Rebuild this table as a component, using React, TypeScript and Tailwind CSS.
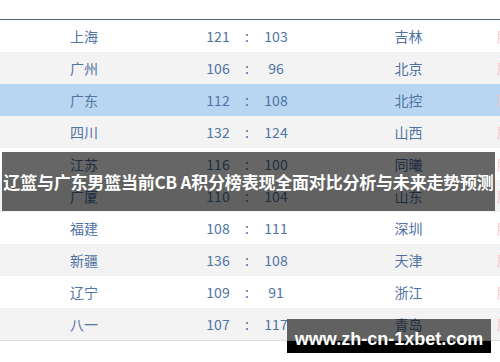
const rows = [
  { home: '上海', a: 121, b: 103, away: '吉林' },
  { home: '广州', a: 106, b: 96, away: '北京' },
  { home: '广东', a: 112, b: 108, away: '北控', active: true },
  { home: '四川', a: 132, b: 124, away: '山西' },
  { home: '江苏', a: 116, b: 100, away: '同曦' },
  { home: '广厦', a: 110, b: 104, away: '山东' },
  { home: '福建', a: 108, b: 111, away: '深圳' },
  { home: '新疆', a: 136, b: 108, away: '天津' },
  { home: '辽宁', a: 109, b: 91, away: '浙江' },
  { home: '八一', a: 107, b: 117, away: '青岛' },
]

export default function App() {
  return (
    <div
      className="relative w-[500px] h-[362px] overflow-hidden bg-white"
      style={{ fontFamily: '"Noto Sans CJK SC", "Liberation Sans", sans-serif' }}
    >
      <div className="h-[19px]" />

      {/* score table */}
      <div className="border-t border-b border-t-[#4d6a7e] border-b-[#dcdcdc] w-[540px]">
        {rows.map((r, i) => (
          <div
            key={i}
            className={`flex items-center h-[32px] text-[14px] text-[#4f73a3] ${
              r.active ? 'bg-[#b8d6f1]' : i % 2 === 1 ? 'bg-[#f3f3f3]' : 'bg-white'
            }`}
          >
            <div className="w-[168px] shrink-0 text-center">{r.home}</div>
            <div className="w-[25px] shrink-0" />
            <div className="w-[50px] shrink-0 text-center">{r.a}</div>
            <div className="w-[8px] shrink-0 text-center">:</div>
            <div className="w-[50px] shrink-0 text-center">{r.b}</div>
            <div className="w-[215px] shrink-0 text-center">{r.away}</div>
            <div className="ml-[-19px] shrink-0 text-[#f4c4ca]">胜</div>
          </div>
        ))}
      </div>

      {/* title overlay */}
      <div className="absolute left-[2px] top-[152px] w-[493px] h-[59px] bg-black/60 flex items-center justify-center">
        <span className="text-white font-bold text-[17px] whitespace-nowrap tracking-[-0.2px]">
          辽篮与广东男篮当前CB A积分榜表现全面对比分析与未来走势预测
        </span>
      </div>

      {/* watermark */}
      <div className="absolute left-[287px] top-[319px] w-[204px] flex flex-col">
        <div className="h-[22px] bg-black/60" />
        <div className="h-[12px] bg-black" />
        <span
          className="absolute inset-x-0 top-[8px] text-center text-white font-bold text-[18px] leading-[24px]"
          style={{ fontFamily: '"Liberation Sans", sans-serif' }}
        >
          www.zh-cn-1xbet.com
        </span>
      </div>
    </div>
  )
}
